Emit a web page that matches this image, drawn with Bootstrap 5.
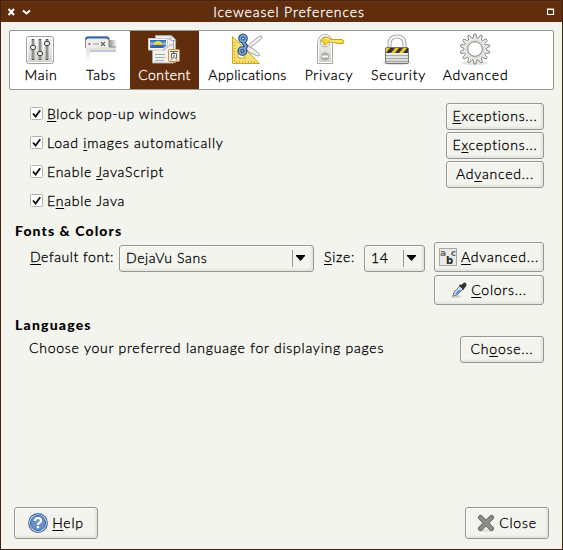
<!DOCTYPE html>
<html lang="en">
<head>
<meta charset="utf-8">
<title>Iceweasel Preferences</title>
<link href="https://cdn.jsdelivr.net/npm/bootstrap@5.3.0/dist/css/bootstrap.min.css" rel="stylesheet">
<style>
body{width:563px;height:550px;overflow:hidden;background:#f4f4ef;color:#000;font:300 14px/20px Lato,"Open Sans",sans-serif;letter-spacing:.77px;white-space:nowrap;-webkit-text-stroke:.3px}
svg{display:block;flex:none}
.window{height:550px;border:1px solid #43210c;border-top:0}
.titlebar{height:22px;background:#612e0d;border-top:1px solid #43210c;box-shadow:inset 0 1px #6d3510;color:#fff;padding:0 7px 0 6px}
.title-text{letter-spacing:.9px;padding-right:18px}
.tabstrip{height:60px;margin:8px 8px 0;border:1px solid #979792;border-radius:2px;background:#fff}
.pane{width:62px;padding-top:2px;line-height:18px}
.pane svg{margin:0 1px 1px 0}
.pane.active{background:#612e0d;color:#fff;letter-spacing:.5px}
.w-tabs{width:58px}.w-content{width:69px}.w-apps{width:97px;letter-spacing:.4px}.w-priv{width:66px}.w-sec{width:73px}.w-adv{width:81px}
.options{margin:10px 18px 0 29px}
.option{height:29px}
.option label{padding-top:4px}
.tick{width:14px;height:14px;margin:3px 3px 0 0}
.option .popups{letter-spacing:.6px}
.gbtn{height:27px;width:98px;padding:0 0 1px;border:1px solid #979792;border-radius:3px;background:#f4f4ef;box-shadow:inset -2px -2px 2px #e4e4df,inset 1px 1px #fbfbf8;color:#000;font:inherit;letter-spacing:inherit;display:flex;align-items:center;justify-content:center}
.option .gbtn{margin-top:3px}
.gbtn.tall{width:110px;height:30px}
.gbtn.foot{width:84px;height:32px}
.gbtn.choose{width:84px}
.heading{font-weight:900;letter-spacing:1.1px;font-size:14px;margin:5px 0 0 14px;-webkit-text-stroke:0}
.languages{letter-spacing:1.2px;margin-top:10px}
.fontrow{margin:1px 18px 0 29px}
.langrow{margin:1px 18px 0 28px}
.langrow>span{padding-top:2px}
.family{width:89px;padding-top:5px;letter-spacing:.55px}
.size-label{width:50px;padding:5px 0 0 10px}
.combo{height:27px;margin-top:3px;border:1px solid #979792;border-radius:3px;box-shadow:inset -2px -2px 2px #e4e4df,inset 1px 1px #fbfbf8;padding:0 8px 1px 6px;letter-spacing:.6px}
.combo.face{width:195px}
.combo.points{width:61px}
.combo .sep{width:13px;height:17px;border-left:1px solid #979792;padding:5px 0 0 3px}
.stack{row-gap:3px}
.abc{width:18px;height:18px;border:1px solid #a8a8a4;background:#e9e9e5;font:700 9px/8px "DejaVu Sans",sans-serif;letter-spacing:0;-webkit-text-stroke:0;color:#666}
.abc b{font-size:10px;line-height:7px;padding-left:3px;color:#222}
.footer{padding:0 13px 10px}
u{text-decoration-thickness:1px;text-underline-offset:2px}
</style>
<script src="https://cdn.jsdelivr.net/npm/bootstrap@5.3.0/dist/js/bootstrap.bundle.min.js"></script>
</head>
<body>
<svg width="0" height="0" class="position-absolute">
<defs>
<linearGradient id="metal" x2="0" y2="1"><stop stop-color="#fdfdfd"/><stop offset="1" stop-color="#cfcfca"/></linearGradient>
<linearGradient id="sky" x2="0" y2="1"><stop stop-color="#2a62ac"/><stop offset=".55" stop-color="#9cc4ea"/><stop offset=".6" stop-color="#3c70b0"/><stop offset="1" stop-color="#7aa4d4"/></linearGradient>
<linearGradient id="fade" x2="0" y2="1"><stop stop-color="#dcdcd8"/><stop offset="1" stop-color="#fff"/></linearGradient>
<linearGradient id="fadeR"><stop stop-color="#8d8d89"/><stop offset="1" stop-color="#fff"/></linearGradient>
<symbol id="check" viewBox="0 0 14 14"><rect x=".5" y=".5" width="12" height="12" rx="1" fill="#fff" stroke="#b4b4af"/><path d="M3 6.500l2.600 3 4.600-6.300" fill="none" stroke="#111" stroke-width="1.900"/></symbol>
<symbol id="down" viewBox="0 0 9 6"><path d="M0 0h9v1L4.500 6 0 1z"/></symbol>
</defs>
</svg>
<div class="window d-flex flex-column">
 <header class="titlebar d-flex align-items-center">
  <svg width="26" height="10" viewBox="0 0 26 10" fill="none" stroke="#fff" stroke-width="2"><path d="M1.500 2l5.500 6M7 2L1.500 8M16 3.500l3.500 3 3.500-3"/></svg>
  <div class="title-text flex-grow-1 text-center ps-3">Iceweasel Preferences</div>
  <svg width="8" height="8" viewBox="0 0 8 8"><path d="M.5 1.500h6v5h-6zM0 1h7" fill="none" stroke="#fff" stroke-width="1.200"/></svg>
 </header>
 <nav class="tabstrip d-flex">
  <div class="pane d-flex flex-column align-items-center">
   <svg width="32" height="32" viewBox="0 0 32 32"><rect x="1.500" y="3.500" width="27" height="27" rx="2.500" fill="url(#metal)" stroke="#a3a39e"/><rect x="2.500" y="4.500" width="25" height="25" rx="2" fill="none" stroke="#fff"/><g stroke="#555753" stroke-width="2.500"><path d="M8 6v21M15 6v21M22 6v21"/></g><g stroke="#c9c9c5"><path d="M8 7v19M15 7v19M22 7v19"/></g><g fill="#eee" stroke="#444"><rect x="5.500" y="12.500" width="5" height="4" rx="1.500"/><rect x="12.500" y="18.500" width="5" height="4" rx="1.500"/><rect x="19.500" y="8.500" width="5" height="4" rx="1.500"/></g></svg>
   <span>Main</span></div>
  <div class="pane w-tabs d-flex flex-column align-items-center">
   <svg width="32" height="32" viewBox="0 0 32 32"><path d="M24 7h8v9h-8z" fill="url(#fadeR)"/><path d="M1 14h30v14H1z" fill="url(#fade)"/><path d="M5 18h26v11H5z" fill="#fff"/><path d="M5 18h26" stroke="#bbc9dc" stroke-width="2"/><path d="M.5 15V6q0-2 2-2H22q2 0 2 2v8h7" fill="#eeeeeb" stroke="#8c8c88"/><path d="M1 6.500Q1 4.500 3 4.500h19q1.500 0 1.500 2" fill="none" stroke="#3465a4" stroke-width="2"/><circle cx="4.500" cy="11" r="1.100" fill="#d33"/><path d="M8 11h6" stroke="#999"/><path d="M16 9l4 4m0-4l-4 4" stroke="#666" stroke-width="1.200"/></svg>
   <span>Tabs</span></div>
  <div class="pane w-content active d-flex flex-column align-items-center">
   <svg width="32" height="32" viewBox="0 0 32 32"><path d="M7.500 2.500h16l4 4v23h-20z" fill="#eee" stroke="#aaa"/><path d="M4.500 6h19l2 2v22h-21z" fill="#f1f1ef" stroke="#a8a8a4"/><path d="M23 2.500l5 5h-5z" fill="#fff" stroke="#aaa"/><path d="M7 21.500h10M7 24.500h10M7 27.500h9M21 12h4" stroke="#aaa"/><path d="M.5 5.500h19v8l-3 3.500H.5z" fill="#fafafa" stroke="#ccc"/><path d="M2 7h16v6l-2 2H2z" fill="url(#sky)"/><path d="M6 12q0-4 4-4t4 4z" fill="#f0d648"/><path d="M2 14q6-4 14-1l-1 2H2z" fill="#3466a4"/><path d="M15.500 17l1-3 4-.5z" fill="#fff" stroke="#bbb"/><rect x="20.500" y="16.500" width="11" height="12" rx="1" fill="#eee" stroke="#d88a20"/><path d="M22 18.500h8M26 18.500l-.8 2M23.500 25v-4.500h5V25M26 21.500v2.500l-3.500 3M26.500 24.500l3 2.500" fill="none" stroke="#555" stroke-width=".9"/></svg>
   <span>Content</span></div>
  <div class="pane w-apps d-flex flex-column align-items-center">
   <svg width="32" height="32" viewBox="0 0 32 32"><path d="M1.500 3.500l27 27h-27zM7 17.500v7.500h7.500z" fill="#f3df76" fill-rule="evenodd" stroke="#d1aa12"/><path d="M3.500 9v20M5 29h20" stroke="#c9a520" stroke-width="1.500" stroke-dasharray="1 2"/><path d="M13 16.500Q20 9 28.500 3q2.500-.5 2.500 2Q25 11 15.500 16.500z" fill="#f4f4f2" stroke="#a0a09c"/><path d="M13.500 11.500q9 3 15.500 10-.5 2-2.500 1.500-8-2-14-9z" fill="#ececea" stroke="#a0a09c"/><g fill="none" stroke="#204a87" stroke-width="4"><ellipse cx="12" cy="5.500" rx="2.800" ry="3"/><ellipse cx="11.500" cy="18" rx="3" ry="2.800"/><path d="M12 9l3 4-1.500 3"/></g><g fill="none" stroke="#7ba3d6" stroke-width="1.800"><ellipse cx="12" cy="5.500" rx="2.800" ry="3"/><ellipse cx="11.500" cy="18" rx="3" ry="2.800"/><path d="M12 9l3 4-1.500 3"/></g></svg>
   <span>Applications</span></div>
  <div class="pane w-priv d-flex flex-column align-items-center">
   <svg width="32" height="32" viewBox="0 0 32 32"><path d="M4.500 30.500V10Q5.500 1.500 12 1.500t7.500 8.500v20.500z" fill="url(#metal)" stroke="#a8a8a3"/><path d="M5.500 29.500V10Q6.500 2.500 12 2.500t6.500 7.500v19.500z" fill="none" stroke="#fff"/><circle cx="12" cy="9" r="4.800" fill="#fff" stroke="#aaa"/><path d="M8.500 8.500Q9 4 13 4q3 0 5 2.500h11q3.500 1.500 1 4-6 .5-11-1.500-3-.5-4.500.5-1 3-3.500 2.500-1.500-1 .5-3-1-1-2 .5z" fill="#f4d93c" stroke="#c8a00c"/><path d="M13 5.500q3 .5 4.500 2.500h11" fill="none" stroke="#fdf3a8"/><circle cx="12" cy="23.500" r="4" fill="#aaa"/><path d="M9 23.500h6" stroke="#fff" stroke-width="2"/></svg>
   <span>Privacy</span></div>
  <div class="pane w-sec d-flex flex-column align-items-center">
   <svg width="32" height="32" viewBox="0 0 32 32"><ellipse cx="15" cy="30" rx="14" ry="2" fill="#ddd"/><path d="M7.500 15v-4q0-7.500 7.500-7.500t7.500 7.500v4" fill="none" stroke="#999995" stroke-width="4"/><path d="M7.500 15v-4q0-7.500 7.500-7.500t7.500 7.500v4" fill="none" stroke="#f2f2f0" stroke-width="2.400"/><rect x="3.500" y="14.500" width="23" height="16" rx="1.500" fill="url(#metal)" stroke="#777"/><path d="M4 15h22v5H4z" fill="#e8c52b"/><path d="M8 15h5l-4 5H4zM17 15h4l-4 5h-4zM25 15h1v5h-5z" fill="#333"/><path d="M4 22.500h22M4 25.500h22M4 28.500h22" stroke="#aaa"/></svg>
   <span>Security</span></div>
  <div class="pane w-adv d-flex flex-column align-items-center">
   <svg width="32" height="32" viewBox="0 0 32 32"><ellipse cx="16" cy="30" rx="13" ry="2" fill="#e4e4e1"/><g id="gear"></g><circle cx="16" cy="16" r="8.500" fill="#fff" stroke="#dededb" stroke-width="3"/><circle cx="16" cy="16" r="7.300" fill="#fff" stroke="#858581"/></svg>
   <span>Advanced</span></div>
 </nav>
 <main class="flex-grow-1 d-flex flex-column">
  <section class="options">
   <div class="option d-flex justify-content-between align-items-start"><label class="d-flex popups"><svg class="tick"><use href="#check"/></svg><span><u>B</u>lock pop-up windows</span></label><button class="gbtn"><span><u>E</u>xceptions...</span></button></div>
   <div class="option d-flex justify-content-between align-items-start"><label class="d-flex"><svg class="tick"><use href="#check"/></svg><span>Load <u>i</u>mages automatically</span></label><button class="gbtn"><span>E<u>x</u>ceptions...</span></button></div>
   <div class="option d-flex justify-content-between align-items-start"><label class="d-flex"><svg class="tick"><use href="#check"/></svg><span>Enable <u>J</u>avaScript</span></label><button class="gbtn"><span>Ad<u>v</u>anced...</span></button></div>
   <div class="option d-flex"><label class="d-flex"><svg class="tick"><use href="#check"/></svg><span>E<u>n</u>able Java</span></label></div>
  </section>
  <div class="heading">Fonts &amp; Colors</div>
  <section class="fontrow d-flex align-items-start">
   <label class="family"><u>D</u>efault font:</label>
   <div class="combo face d-flex align-items-center justify-content-between"><span>DejaVu Sans</span><div class="sep"><svg width="9" height="6"><use href="#down"/></svg></div></div>
   <label class="size-label"><u>S</u>ize:</label>
   <div class="combo points d-flex align-items-center justify-content-between"><span>14</span><div class="sep"><svg width="9" height="6"><use href="#down"/></svg></div></div>
   <div class="stack ms-auto d-grid">
    <button class="gbtn tall"><span class="abc me-1 d-flex flex-column"><span class="d-flex justify-content-between"><span>a</span><span>c</span></span><b>b</b></span><span><u>A</u>dvanced...</span></button>
    <button class="gbtn tall"><svg width="16" height="16" viewBox="0 0 16 16" class="me-1"><ellipse cx="5" cy="14.500" rx="5" ry="1.200" fill="#ccc"/><path d="M2 14l1-4 6-6 3 3-6 6z" fill="#c9dff5" stroke="#777"/><path d="M4 12l3.500-4h3L6 12.500z" fill="#5d92cf"/><path d="M7.500 3l5 5 1-2q3-2 1.500-4.500T11 2.500z" fill="#333"/></svg><span><u>C</u>olors...</span></button>
   </div>
  </section>
  <div class="heading languages">Languages</div>
  <section class="langrow d-flex justify-content-between"><span>Choose your preferred language for displaying pages</span><button class="gbtn choose"><span>Ch<u>o</u>ose...</span></button></section>
 </main>
 <footer class="footer d-flex justify-content-between">
  <button class="gbtn foot"><svg width="20" height="20" viewBox="0 0 20 20" class="me-1"><circle cx="10" cy="10" r="9.300" fill="#fff" stroke="#3465a4" stroke-width="1.200"/><circle cx="10" cy="10" r="7.600" fill="#6a8fc4" stroke="#3465a4"/><path d="M7 8q0-3 3-3t3 2.600q0 1.400-2 2.400-1 .6-1 2" fill="none" stroke="#fff" stroke-width="2.200"/><rect x="8.800" y="13" width="2.300" height="2.200" fill="#fff"/></svg><span><u>H</u>elp</span></button>
  <button class="gbtn foot"><svg width="18" height="18" viewBox="0 0 18 18" class="me-1"><ellipse cx="9" cy="16.500" rx="8" ry="1.300" fill="#ddd"/><path d="M3.500 3.500l11 11m0-11l-11 11" stroke="#666" stroke-width="5" stroke-linecap="round"/><path d="M3.500 3.500l11 11m0-11l-11 11" stroke="#8c8c88" stroke-width="3.200" stroke-linecap="round"/></svg><span>Close</span></button>
 </footer>
</div>
<script>
const gear=document.getElementById('gear');let d='';
for(let i=0;i<14;i++){const a=i*Math.PI/7,p=(r,o)=>(16+r*Math.sin(a+o)).toFixed(1)+' '+(16-r*Math.cos(a+o)).toFixed(1);d+=(i?'L':'M')+p(11,-.17)+'L'+p(15,-.06)+'L'+p(15,.06)+'L'+p(11,.17)}
gear.innerHTML='<path d="'+d+'Z" fill="#eeeeec" stroke="#858581"/>';
</script>
</body>
</html>
